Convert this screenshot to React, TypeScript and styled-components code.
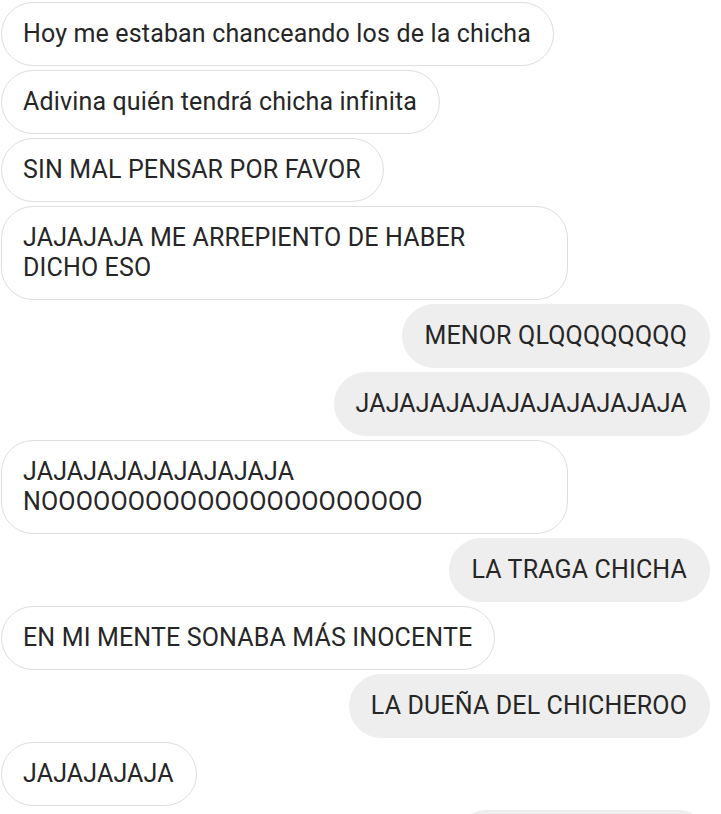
import React from "react";
import styled, { createGlobalStyle } from "styled-components";

const GlobalStyle = createGlobalStyle`
  html, body { margin: 0; padding: 0; background: #ffffff; }
  body { font-family: Roboto, "Noto Sans", Arial, sans-serif; }
`;

const Thread = styled.div`
  display: flex;
  flex-direction: column;
  gap: 4px;
  padding: 2px 11px 20px 1px;
  width: 721px;
  box-sizing: border-box;
`;

const Row = styled.div<{ $mine?: boolean }>`
  display: flex;
  justify-content: ${(p) => (p.$mine ? "flex-end" : "flex-start")};
`;

const Bubble = styled.div<{ $mine?: boolean }>`
  box-sizing: border-box;
  max-width: 567px;
  padding: 16px 22px 16px 21px;
  border-radius: 32px;
  font-size: 25px;
  letter-spacing: 0.15px;
  line-height: 30px;
  color: #262626;
  background: ${(p) => (p.$mine ? "#eeeeee" : "#ffffff")};
  border: 1px solid ${(p) => (p.$mine ? "#eeeeee" : "#dedede")};
  white-space: pre-wrap;
`;

type Msg = { text: string; mine?: boolean };

const messages: Msg[] = [
  { text: "Hoy me estaban chanceando los de la chicha" },
  { text: "Adivina quién tendrá chicha infinita" },
  { text: "SIN MAL PENSAR POR FAVOR" },
  { text: "JAJAJAJA ME ARREPIENTO DE HABER DICHO ESO" },
  { text: "MENOR QLQQQQQQQQ", mine: true },
  { text: "JAJAJAJAJAJAJAJAJAJAJA", mine: true },
  { text: "JAJAJAJAJAJAJAJAJA NOOOOOOOOOOOOOOOOOOOOOO" },
  { text: "LA TRAGA CHICHA", mine: true },
  { text: "EN MI MENTE SONABA MÁS INOCENTE" },
  { text: "LA DUEÑA DEL CHICHEROO", mine: true },
  { text: "JAJAJAJAJA" },
  { text: "JAJAJAJAJAJAJA", mine: true },
];

export default function App() {
  return (
    <>
      <GlobalStyle />
      <Thread>
        {messages.map((m, i) => (
          <Row key={i} $mine={m.mine}>
            <Bubble $mine={m.mine}>{m.text}</Bubble>
          </Row>
        ))}
      </Thread>
    </>
  );
}
